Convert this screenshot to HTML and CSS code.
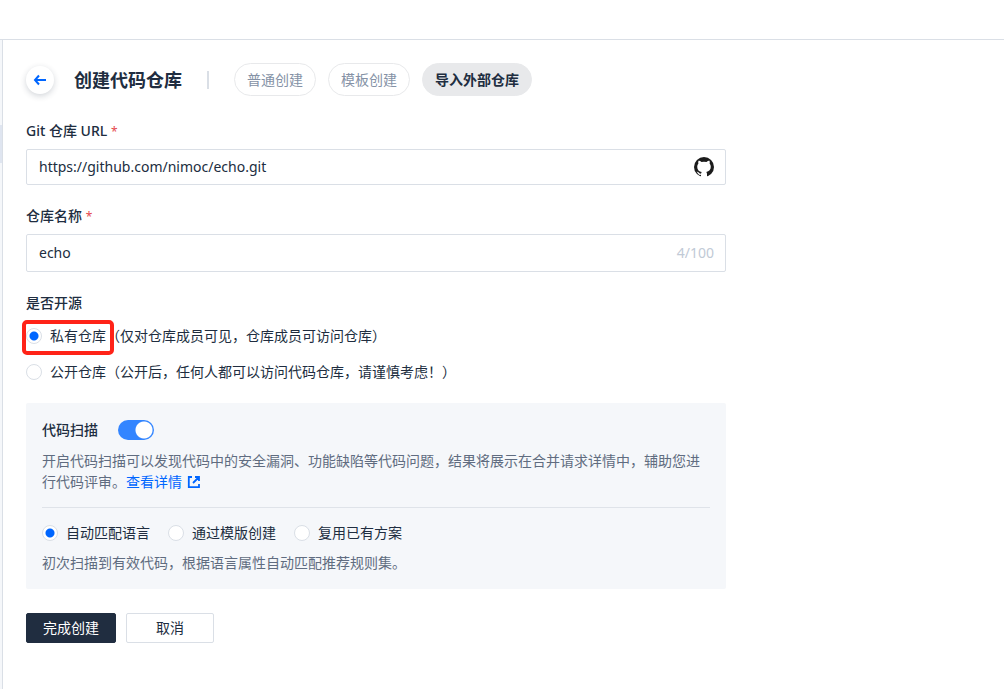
FILE: index.html
```html
<!DOCTYPE html>
<html lang="zh-CN">
<head>
  <meta charset="utf-8">
  <meta name="viewport" content="width=device-width, initial-scale=1">
  <title>创建代码仓库</title>
  <link rel="stylesheet" href="styles.css">
</head>
<body>
  <div class="app">
    <div class="topbar"></div>
    <div class="body">
      <aside class="rail"><div class="rail-active"></div></aside>
      <main class="main">
        <header class="header">
          <button class="back" type="button" aria-label="返回">
            <svg width="14" height="12" viewBox="0 0 14 12" fill="none" stroke="currentColor" stroke-width="2"><path d="M6 1.500 2 6 6 10.500M2 6h11"/></svg>
          </button>
          <h1 class="title">创建代码仓库</h1>
          <span class="separator"></span>
          <nav class="modes">
            <button class="mode" type="button">普通创建</button>
            <button class="mode" type="button">模板创建</button>
            <button class="mode mode-active" type="button">导入外部仓库</button>
          </nav>
        </header>

        <form class="form">
          <div class="field">
            <label class="label" for="url">Git 仓库 URL <span class="required">*</span></label>
            <div class="control">
              <input class="input" id="url" type="text" value="https://github.com/nimoc/echo.git">
              <svg class="github" width="20" height="20" viewBox="0 0 20 20"><circle cx="10" cy="10" r="10" fill="currentColor"/><path fill="#fff" d="M4.500 3.800c1.100 0 2.200.5 3 1.200a10 10 0 0 1 5 0c.8-.7 1.900-1.200 3-1.200.4 1 .4 2 .1 2.800.8.900 1.200 1.900 1.200 3.200 0 3.200-1.700 4.700-4.500 5.100.5.500.7 1.200.7 2V20H7v-2.200c-2.300.5-2.900-1-3.500-2-.3-.5-.6-.7-1-1 1.600-.5 2.200.6 2.800 1.300.5.600 1.100.7 1.800.4.100-.6.300-1.100.6-1.500-2.700-.4-4.500-2-4.500-5.200 0-1.300.4-2.300 1.200-3.200-.3-.8-.3-1.800.1-2.800z"/></svg>
            </div>
          </div>

          <div class="field">
            <label class="label" for="name">仓库名称 <span class="required">*</span></label>
            <div class="control control-tall">
              <input class="input" id="name" type="text" maxlength="100" value="echo">
              <span class="counter">4/100</span>
            </div>
          </div>

          <fieldset class="visibility">
            <legend class="label">是否开源</legend>
            <div class="options">
              <label class="option">
                <input class="radio" type="radio" name="visibility" checked>
                <span>私有仓库（仅对仓库成员可见，仓库成员可访问仓库）</span>
                <span class="highlight"></span>
              </label>
              <label class="option">
                <input class="radio" type="radio" name="visibility">
                <span>公开仓库（公开后，任何人都可以访问代码仓库，请谨慎考虑！）</span>
              </label>
            </div>
          </fieldset>

          <section class="panel">
            <div class="scan">
              <label class="scan-title" for="scan">代码扫描</label>
              <input class="switch" id="scan" type="checkbox" role="switch" checked>
            </div>
            <p class="text">开启代码扫描可以发现代码中的安全漏洞、功能缺陷等代码问题，结果将展示在合并请求详情中，辅助您进行代码评审。<a class="link" href="#">查看详情<svg class="external" width="14" height="14" viewBox="0 0 14 14" fill="none" stroke="currentColor" stroke-width="1.800"><path d="M5 2H1.800v10.200H12V9M8 2h4v4M12 2 6 8"/></svg></a></p>
            <div class="plans">
              <label class="option"><input class="radio" type="radio" name="plan" checked><span>自动匹配语言</span></label>
              <label class="option"><input class="radio" type="radio" name="plan"><span>通过模版创建</span></label>
              <label class="option"><input class="radio" type="radio" name="plan"><span>复用已有方案</span></label>
            </div>
            <p class="text">初次扫描到有效代码，根据语言属性自动匹配推荐规则集。</p>
          </section>

          <div class="actions">
            <button class="button button-primary" type="submit">完成创建</button>
            <button class="button" type="button">取消</button>
          </div>
        </form>
      </main>
    </div>
  </div>
</body>
</html>
```

FILE: styles.css
```css
* {
  box-sizing: border-box;
}

body {
  margin: 0;
  background: #fff;
  color: #202d40;
  font: 14px/20px "Noto Sans", "Noto Sans CJK SC", sans-serif;
}

button,
input {
  margin: 0;
  color: inherit;
  font: inherit;
}

button {
  cursor: pointer;
}

.app {
  display: flex;
  flex-direction: column;
  min-height: 100vh;
}

.topbar {
  height: 40px;
  border-bottom: 1px solid #dadfe6;
}

.body {
  display: flex;
  flex: 1;
}

.rail {
  width: 3px;
  padding-top: 85px;
  border-right: 1px solid #dadfe6;
  background: #f5f7fa;
}

.rail-active {
  height: 38px;
  background: #dfe5f0;
}

.main {
  flex: 1;
  padding: 23px;
}

.header {
  display: flex;
  align-items: center;
}

.back {
  display: grid;
  place-items: center;
  width: 28px;
  height: 28px;
  padding: 0;
  border: 0;
  border-radius: 50%;
  background: #fff;
  box-shadow: 0 2px 6px rgba(32, 45, 64, 0.2);
  color: #0066ff;
}

.title {
  margin: 0 25px 0 20px;
  font-size: 18px;
  line-height: 24px;
  font-weight: 700;
}

.separator {
  width: 2px;
  height: 18px;
  margin-right: 25px;
  background: #dadfe6;
}

.modes {
  display: flex;
  gap: 12px;
}

.mode {
  height: 33px;
  padding: 0 12px;
  border: 1px solid #e8e9eb;
  border-radius: 17px;
  background: #fff;
  color: #8592a6;
}

.mode-active {
  background: #e8e9eb;
  color: #202d40;
  font-weight: 700;
}

.form {
  max-width: 700px;
  margin-top: 25px;
}

.field {
  margin-bottom: 21px;
}

.label {
  display: block;
  margin-bottom: 8px;
  padding: 0;
  font-size: 14px;
  font-weight: 500;
}

.required {
  color: #e5484d;
  font-size: 12px;
  line-height: 12px;
  font-weight: 400;
}

.control {
  display: flex;
  align-items: center;
  height: 36px;
  padding: 0 11px 0 12px;
  border: 1px solid #dadfe6;
  border-radius: 2px;
}

.control-tall {
  height: 38px;
}

.input {
  flex: 1;
  min-width: 0;
  padding: 0;
  border: 0;
  outline: 0;
  background: none;
}

.github {
  color: #1b1b1b;
}

.counter {
  color: #c1cad6;
}

.visibility {
  margin: 0;
  padding: 0;
  border: 0;
}

.options {
  display: grid;
  gap: 16px;
  margin-top: 13px;
}

.visibility .label {
  margin-bottom: 0;
}

.option {
  position: relative;
  display: flex;
  align-items: center;
  gap: 8px;
}

.radio {
  flex: none;
  width: 16px;
  height: 16px;
  border: 1px solid #dadfe6;
  border-radius: 50%;
  background: #fff;
  appearance: none;
}

.radio:checked {
  background: radial-gradient(circle, #0066ff 4px, #fff 5px);
}

.highlight {
  position: absolute;
  top: -6px;
  left: -4px;
  width: 92px;
  height: 35px;
  border: 4px solid #ff2318;
  border-radius: 5px;
}

.panel {
  margin-top: 21px;
  padding: 15px 16px 16px;
  border-radius: 2px;
  background: #f5f7fa;
}

.scan {
  display: flex;
  align-items: center;
  gap: 20px;
  height: 24px;
  margin-bottom: 8px;
}

.scan-title {
  font-weight: 500;
}

.switch {
  width: 36px;
  height: 20px;
  border-radius: 10px;
  background: radial-gradient(circle at 26px 10px, #fff 8px, #3385ff 9px);
  appearance: none;
}

.text {
  margin: 0;
  color: #606c80;
  line-height: 21px;
}

.link {
  color: #0066ff;
  text-decoration: none;
}

.external {
  margin-left: 5px;
  vertical-align: -2px;
}

.plans {
  display: flex;
  flex-wrap: wrap;
  gap: 18px;
  margin: 15px 0 9px;
  padding-top: 15px;
  border-top: 1px solid #dfe3e9;
}

.actions {
  display: flex;
  gap: 10px;
  margin-top: 24px;
}

.button {
  min-width: 88px;
  height: 30px;
  padding: 0 16px;
  border: 1px solid #dadfe6;
  border-radius: 2px;
  background: #fff;
}

.button-primary {
  min-width: 90px;
  border-color: #202d40;
  background: #202d40;
  color: #fff;
}
```
